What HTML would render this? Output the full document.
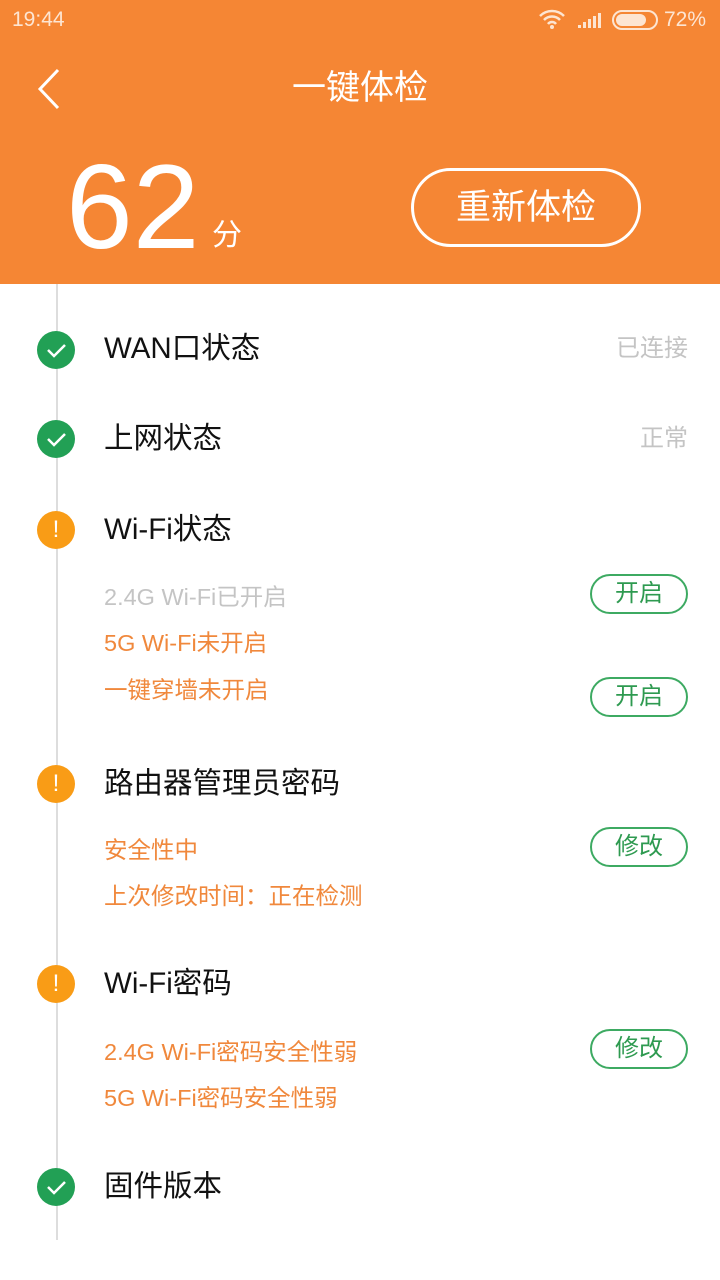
<!DOCTYPE html><html><head><meta charset="utf-8"><style>
*{margin:0;padding:0;box-sizing:border-box}
body{width:720px;height:1280px;background:#fff;position:relative;overflow:hidden;font-family:"Liberation Sans","Noto Sans CJK SC",sans-serif}
.a{position:absolute;white-space:nowrap}
.hd{position:absolute;left:0;top:0;width:720px;height:284px;background:#F58634}
.t{font-size:29.5px;line-height:36px;color:#111;left:104px}
.s{font-size:23.5px;line-height:28px;left:104px;color:#F0883C}
.g{color:#c4c4c4}
.r{font-size:24px;line-height:28px;color:#c4c4c4;right:32px}
.ic{position:absolute;left:37px;width:38px;height:38px;border-radius:50%}
.ok{background:#22A055}
.w{background:#F99C16;color:#fff;font-size:24px;line-height:38px;text-align:center;font-weight:300}
.b{position:absolute;left:590px;width:98px;height:40px;border:2px solid #3DAA62;border-radius:20px;color:#2E9A50;font-size:24px;line-height:36px;text-align:center}
</style></head><body>
<div class="hd"></div>
<div class="a" style="left:12px;top:8px;font-size:21px;color:#fde5d2">19:44</div>
<svg class="a" style="left:538px;top:8px" width="28" height="22" viewBox="0 0 28 22"><path d="M2 8a17 17 0 0 1 24 0M6 12a11 11 0 0 1 16 0M10 16a5 5 0 0 1 8 0" stroke="#fde5d2" stroke-width="2.5" fill="none"/><circle cx="14" cy="19" r="2" fill="#fde5d2"/></svg>
<svg class="a" style="left:576px;top:10px" width="26" height="20"><path d="M2 18h3v-3H2zM7 18h3v-6H7zM12 18h3v-9h-3zM17 18h3v-12h-3zM22 18h3V3h-3z" fill="#fde5d2"/></svg>
<div class="a" style="left:612px;top:10px;width:46px;height:20px;border:2px solid #fde5d2;border-radius:10px"><div style="margin:2px;width:30px;height:12px;background:#fde5d2;border-radius:6px"></div></div>
<div class="a" style="left:664px;top:8px;font-size:21px;color:#fde5d2">72%</div>
<svg class="a" style="left:36px;top:68px" width="26" height="42"><path d="M22 2L4 21l18 19" stroke="#fff" stroke-width="3" fill="none"/></svg>
<div class="a" style="left:292px;top:68px;font-size:34px;line-height:40px;color:#fff">一键体检</div>
<div class="a" style="left:66px;top:146px;font-size:120px;line-height:122px;color:#fff">62</div>
<div class="a" style="left:212px;top:218px;font-size:30px;line-height:36px;color:#fff">分</div>
<div class="a" style="left:411px;top:168px;width:230px;height:79px;border:3px solid #fff;border-radius:40px;color:#fff;font-size:35px;line-height:73px;text-align:center">重新体检</div>
<div class="a" style="left:56px;top:284px;width:2px;height:956px;background:#ddd"></div>
<div class="ic ok" style="top:331px"></div><div class="ic ok" style="top:420px"></div><div class="ic ok" style="top:1168px"></div>
<svg class="a" style="left:37px;top:331px" width="38" height="38"><path d="M11 19l6 6 11-11" stroke="#fff" stroke-width="2.5" fill="none"/></svg>
<svg class="a" style="left:37px;top:420px" width="38" height="38"><path d="M11 19l6 6 11-11" stroke="#fff" stroke-width="2.5" fill="none"/></svg>
<svg class="a" style="left:37px;top:1168px" width="38" height="38"><path d="M11 19l6 6 11-11" stroke="#fff" stroke-width="2.5" fill="none"/></svg>
<div class="ic w" style="top:511px">!</div><div class="ic w" style="top:765px">!</div><div class="ic w" style="top:965px">!</div>
<div class="a t" style="top:331px">WAN口状态</div><div class="a r" style="top:335px">已连接</div>
<div class="a t" style="top:421px">上网状态</div><div class="a r" style="top:425px">正常</div>
<div class="a t" style="top:512px">Wi-Fi状态</div>
<div class="a s g" style="top:583px">2.4G Wi-Fi已开启</div>
<div class="a s" style="top:629px">5G Wi-Fi未开启</div>
<div class="a s" style="top:676px">一键穿墙未开启</div>
<div class="b" style="top:574px">开启</div><div class="b" style="top:677px">开启</div>
<div class="a t" style="top:766px">路由器管理员密码</div>
<div class="a s" style="top:836px">安全性中</div>
<div class="a s" style="top:882px">上次修改时间：正在检测</div>
<div class="b" style="top:827px">修改</div>
<div class="a t" style="top:966px">Wi-Fi密码</div>
<div class="a s" style="top:1038px">2.4G Wi-Fi密码安全性弱</div>
<div class="a s" style="top:1084px">5G Wi-Fi密码安全性弱</div>
<div class="b" style="top:1029px">修改</div>
<div class="a t" style="top:1169px">固件版本</div>
<div class="a" style="left:0;top:1240px;width:720px;height:40px;background:#fff"></div>
</body></html>
